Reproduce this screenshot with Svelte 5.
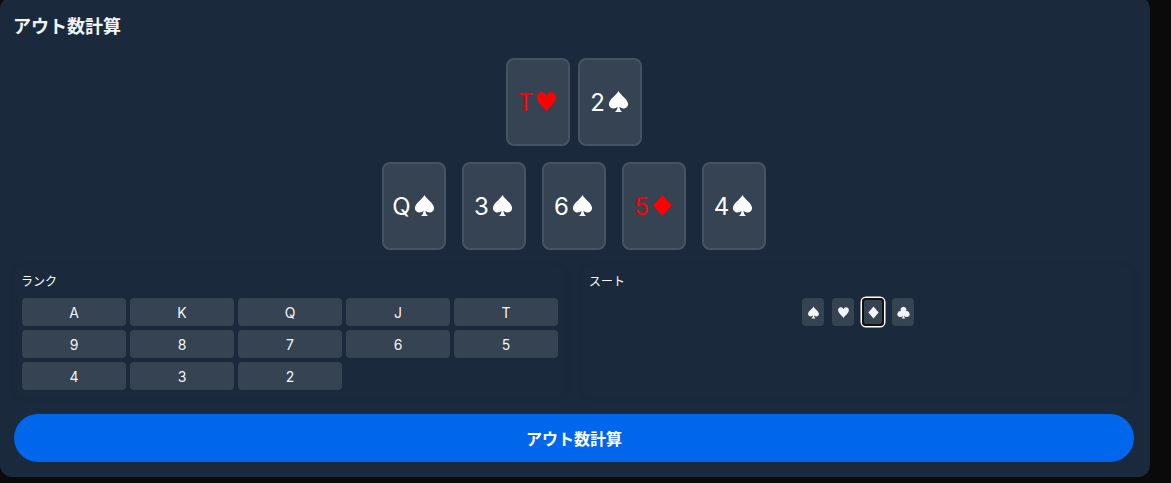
<script>
  const hole = [{ r: 'T', s: 'heart' }, { r: '2', s: 'spade' }];
  const board = [
    { r: 'Q', s: 'spade' },
    { r: '3', s: 'spade' },
    { r: '6', s: 'spade' },
    { r: '5', s: 'diamond' },
    { r: '4', s: 'spade' }
  ];
  const ranks = ['A', 'K', 'Q', 'J', 'T', '9', '8', '7', '6', '5', '4', '3', '2'];
  const suits = ['spade', 'heart', 'diamond', 'club'];
  let selected = $state('diamond');

  const isRed = (s) => s === 'heart' || s === 'diamond';
</script>

{#snippet pip(s)}
  <svg viewBox="0 0 24 24" fill="currentColor" aria-hidden="true">
    {#if s === 'spade'}
      <path d="M12 1C9.5 6 2 9.5 2 14.8 2 17.6 4.2 19.2 6.8 19.2 8.6 19.2 10.2 18.4 11 17.2 10.9 19.6 10 21.6 8.3 23H15.7C14 21.6 13.1 19.6 13 17.2 13.8 18.4 15.4 19.2 17.2 19.2 19.8 19.2 22 17.6 22 14.8 22 9.5 14.5 6 12 1Z"/>
    {:else if s === 'heart'}
      <path d="M12 22C8 17 2 12.8 2 7.6 2 4.4 4.4 2.4 7 2.4 9.2 2.4 11 3.6 12 5.8 13 3.6 14.8 2.4 17 2.4 19.6 2.4 22 4.4 22 7.6 22 12.8 16 17 12 22Z"/>
    {:else if s === 'diamond'}
      <path d="M12 1L21.5 12 12 23 2.5 12Z"/>
    {:else}
      <path d="M12 1.5A5.4 5.4 0 0 0 7.4 9.7 5.4 5.4 0 1 0 10.9 17.4C10.8 19.6 9.9 21.6 8.3 23H15.7C14.1 21.6 13.2 19.6 13.1 17.4A5.4 5.4 0 1 0 16.6 9.7 5.4 5.4 0 0 0 12 1.5Z"/>
    {/if}
  </svg>
{/snippet}

{#snippet playing(c)}
  <div class="card" class:red={isRed(c.s)}>{c.r}{@render pip(c.s)}</div>
{/snippet}

<div class="panel">
  <h2>アウト数計算</h2>

  <div class="row hole">
    {#each hole as c}{@render playing(c)}{/each}
  </div>
  <div class="row board">
    {#each board as c}{@render playing(c)}{/each}
  </div>

  <div class="pickers">
    <section>
      <div class="label">ランク</div>
      <div class="ranks">
        {#each ranks as r}
          <button type="button" class="key">{r}</button>
        {/each}
      </div>
    </section>
    <section>
      <div class="label">スート</div>
      <div class="suits">
        {#each suits as s}
          <button type="button" class="key suit" class:active={selected === s} aria-label={s} onclick={() => (selected = s)}>{@render pip(s)}</button>
        {/each}
      </div>
    </section>
  </div>

  <button type="button" class="calc">アウト数計算</button>
</div>

<style>
  :global(body) {
    background: #0a0a0a;
  }

  .panel {
    box-sizing: border-box;
    width: 1150px;
    height: 480px;
    margin-top: -3px;
    padding: 18px 16px 15px 14px;
    background: #1a2a3c;
    border-radius: 12px;
    color: #f3f4f6;
    font-family: Inter, "Noto Sans CJK JP", sans-serif;
  }

  h2 {
    margin: 0 0 19px -1px;
    font-size: 18px;
    line-height: 24px;
    font-weight: 700;
  }

  .row {
    display: flex;
    justify-content: center;
  }

  .hole {
    gap: 8px;
    margin-bottom: 16px;
  }

  .board {
    gap: 16px;
    margin-bottom: 15px;
  }

  .card {
    box-sizing: border-box;
    width: 64px;
    height: 88px;
    display: flex;
    align-items: center;
    justify-content: center;
    gap: 2px;
    background: #354352;
    border: 2px solid #465362;
    border-radius: 8px;
    color: #fff;
    font-size: 24px;
  }

  .card.red {
    color: #f00;
  }

  .card svg {
    width: 23px;
    height: 23px;
    margin-top: -1px;
  }

  .pickers {
    display: grid;
    grid-template-columns: 552px 552px;
    gap: 16px;
    margin-bottom: 17px;
  }

  section {
    box-sizing: border-box;
    height: 132px;
    padding: 9px 8px 8px;
    border-radius: 12px;
    background: #1a2a3c;
    box-shadow: 0 1px 6px rgba(0, 0, 0, 0.08);
  }

  .label {
    margin-bottom: 8px;
    margin-left: -1px;
    font-size: 12px;
    line-height: 16px;
    color: #fff;
  }

  .ranks {
    display: grid;
    grid-template-columns: repeat(5, 1fr);
    gap: 4px;
  }

  .key {
    height: 28px;
    padding: 0;
    border: 0;
    border-radius: 4px;
    background: #354352;
    color: #f3f4f6;
    font: inherit;
    font-size: 14px;
  }

  .suits {
    display: flex;
    justify-content: center;
    gap: 8px;
  }

  .suit {
    width: 22px;
    display: flex;
    align-items: center;
    justify-content: center;
  }

  .suit svg {
    width: 13px;
    height: 13px;
  }

  .suit.active {
    box-shadow: inset 0 0 0 2px #111, 0 0 0 1.5px #fff;
  }

  .calc {
    display: block;
    width: 100%;
    height: 48px;
    border: 0;
    border-radius: 24px;
    background: #0066eb;
    color: #fff;
    font: inherit;
    font-size: 16px;
    font-weight: 700;
  }
</style>
